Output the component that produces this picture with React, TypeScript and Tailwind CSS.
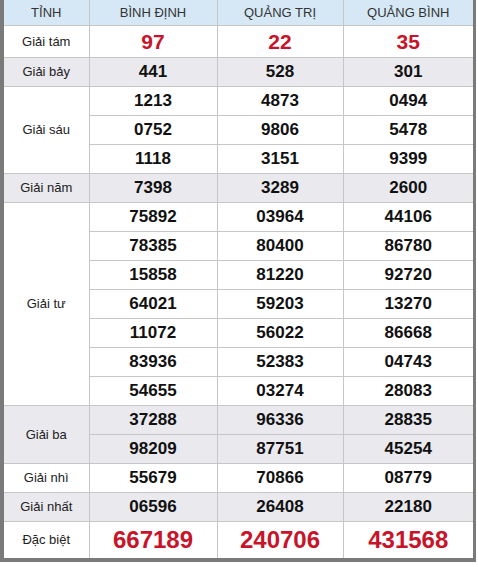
import React from "react";

type Row = { label: string; gray: boolean; vals: string[][]; kind?: "tam" | "db" };

const rows: Row[] = [
  { label: "Giải tám", gray: false, kind: "tam", vals: [["97", "22", "35"]] },
  { label: "Giải bảy", gray: true, vals: [["441", "528", "301"]] },
  {
    label: "Giải sáu",
    gray: false,
    vals: [
      ["1213", "4873", "0494"],
      ["0752", "9806", "5478"],
      ["1118", "3151", "9399"],
    ],
  },
  { label: "Giải năm", gray: true, vals: [["7398", "3289", "2600"]] },
  {
    label: "Giải tư",
    gray: false,
    vals: [
      ["75892", "03964", "44106"],
      ["78385", "80400", "86780"],
      ["15858", "81220", "92720"],
      ["64021", "59203", "13270"],
      ["11072", "56022", "86668"],
      ["83936", "52383", "04743"],
      ["54655", "03274", "28083"],
    ],
  },
  {
    label: "Giải ba",
    gray: true,
    vals: [
      ["37288", "96336", "28835"],
      ["98209", "87751", "45254"],
    ],
  },
  { label: "Giải nhì", gray: false, vals: [["55679", "70866", "08779"]] },
  { label: "Giải nhất", gray: true, vals: [["06596", "26408", "22180"]] },
  { label: "Đặc biệt", gray: false, kind: "db", vals: [["667189", "240706", "431568"]] },
];

export default function App() {
  return (
    <div className="w-[478px] h-[567px] bg-white font-['Liberation_Sans',Arial,sans-serif]">
      <div className="w-[476px] border-l-[4px] border-r-[3px] border-b-[4px] border-[#7a7a7a]">
        <table className="w-[469px] border-collapse table-fixed">
          <colgroup>
            <col className="w-[85px]" />
            <col className="w-[128px]" />
            <col className="w-[126px]" />
            <col className="w-[130px]" />
          </colgroup>
          <thead>
            <tr className="bg-[#d6e8f5] h-[25px]">
              {["TỈNH", "BÌNH ĐỊNH", "QUẢNG TRỊ", "QUẢNG BÌNH"].map((h, i) => (
                <th
                  key={h}
                  className={`font-normal text-[13px] text-[#333] border-b border-[#c6c6c6] p-0 leading-none ${i > 0 ? "border-l" : ""}`}
                >
                  {h}
                </th>
              ))}
            </tr>
          </thead>
          <tbody>
            {rows.map((r) =>
              r.vals.map((v, j) => {
                const h = r.kind === "tam" ? "h-[32px]" : r.kind === "db" ? "h-[37px]" : "h-[29px]";
                const bg = r.gray ? "bg-[#e9e9ee]" : "bg-white";
                const numCls =
                  r.kind === "tam"
                    ? "text-[21px] text-[#c8142a]"
                    : r.kind === "db"
                    ? "text-[24px] text-[#c8142a]"
                    : "text-[17px] text-[#111]";
                return (
                  <tr key={r.label + j} className={`${bg} ${h}`}>
                    {j === 0 && (
                      <td
                        rowSpan={r.vals.length}
                        className={`text-center text-[13px] text-[#222] border-[#c6c6c6] p-0 leading-none ${
                          r.kind === "db" ? "" : "border-b"
                        }`}
                      >
                        {r.label}
                      </td>
                    )}
                    {v.map((n, k) => (
                      <td
                        key={k}
                        className={`text-center font-bold border-l border-[#c6c6c6] p-0 leading-none ${numCls} ${
                          r.kind === "db" ? "" : "border-b"
                        }`}
                      >
                        {n}
                      </td>
                    ))}
                  </tr>
                );
              })
            )}
          </tbody>
        </table>
      </div>
    </div>
  );
}
